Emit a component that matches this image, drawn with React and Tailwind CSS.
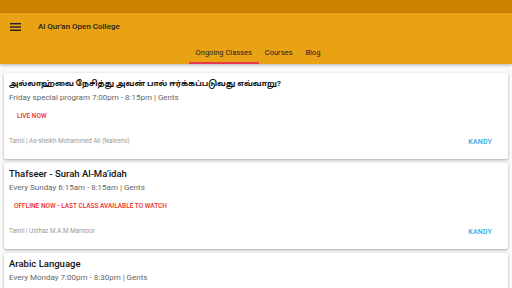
import React from 'react';

const classes = [
  {
    title: 'அல்லாஹ்வை நேசித்து அவன் பால் ஈர்க்கப்படுவது எவ்வாறு?',
    tamil: true,
    time: 'Friday special program 7:00pm - 8:15pm | Gents',
    status: 'LIVE NOW',
    live: true,
    footer: 'Tamil | As-sheikh Mohammed Ali (Naleemi)',
  },
  {
    title: "Thafseer - Surah Al-Ma'idah",
    time: 'Every Sunday 6:15am - 8:15am | Gents',
    status: 'OFFLINE NOW - LAST CLASS AVAILABLE TO WATCH',
    live: false,
    footer: 'Tamil | Usthaz M.A.M Mansoor',
  },
  {
    title: 'Arabic Language',
    time: 'Every Monday 7:00pm - 8:30pm | Gents',
    status: 'OFFLINE NOW',
    live: false,
    footer: 'Tamil | Usthaz',
  },
];

const ClassCard = ({ item }) => (
  <div className="bg-white rounded-[2px] shadow-[0_1px_3px_rgba(0,0,0,0.35)] h-[86px] shrink-0 flex flex-col">
    <div className={`h-[19px] pt-[5px] pl-[5px] leading-[12px] text-[#111] ${item.tamil ? 'text-[7.8px] font-bold' : 'text-[9.5px] font-medium'}`}>
      {item.title}
    </div>
    <div className="h-[12px] pl-[5px] text-[8px] leading-[12px] text-[#666]">{item.time}</div>
    <div className={`h-[12px] mt-[6px] text-[6.5px] leading-[12px] font-medium text-[#f02a2a] ${item.live ? 'pl-[13px]' : 'pl-[10px]'}`}>
      {item.status}
    </div>
    <div className="flex items-center justify-between h-[14px] mt-[13px] pl-[5px] pr-[16px]">
      <span className="text-[6.3px] text-[#9a9a9a]">{item.footer}</span>
      <span className="text-[7px] font-medium text-[#29a8e8] tracking-[0.2px]">KANDY</span>
    </div>
  </div>
);

export default function App() {
  return (
    <div className="w-[512px] h-[288px] overflow-hidden bg-[#fafafa] flex flex-col" style={{ fontFamily: 'Roboto, "Noto Sans Tamil", "Noto Sans", sans-serif' }}>
      <div className="h-[13px] bg-[#cc8400] shrink-0" />
      <div className="bg-[#e9a213] h-[51px] shrink-0 flex flex-col shadow-[0_1px_3px_rgba(0,0,0,0.3)] relative z-10">
        <div className="h-[27px] flex items-center pl-[10px]">
          <svg width="11" height="8" viewBox="0 0 11 8" className="shrink-0">
            <rect x="0" y="0" width="11" height="1.4" fill="#222" />
            <rect x="0" y="3.3" width="11" height="1.4" fill="#222" />
            <rect x="0" y="6.6" width="11" height="1.4" fill="#222" />
          </svg>
          <span className="ml-[17px] text-[8px] font-medium text-[#1a1a1a]">Al Qur'an Open College</span>
        </div>
        <div className="flex-1 flex justify-center items-stretch">
          <div className="flex items-stretch gap-[6px] ml-[4px]">
            <div className="px-[7px] pt-[4px] flex items-center border-b-2 border-[#e5384a] text-[7.5px] text-[#222]">Ongoing Classes</div>
            <div className="px-0 pt-[4px] flex items-center text-[7.5px] text-[#222] border-b-2 border-transparent">Courses</div>
            <div className="px-[7px] pt-[4px] flex items-center text-[7.5px] text-[#222] border-b-2 border-transparent">Blog</div>
          </div>
        </div>
      </div>
      <div className="flex flex-col gap-[4px] px-[4px] pt-[9px]">
        {classes.map((c, i) => (
          <ClassCard key={i} item={c} />
        ))}
      </div>
    </div>
  );
}
